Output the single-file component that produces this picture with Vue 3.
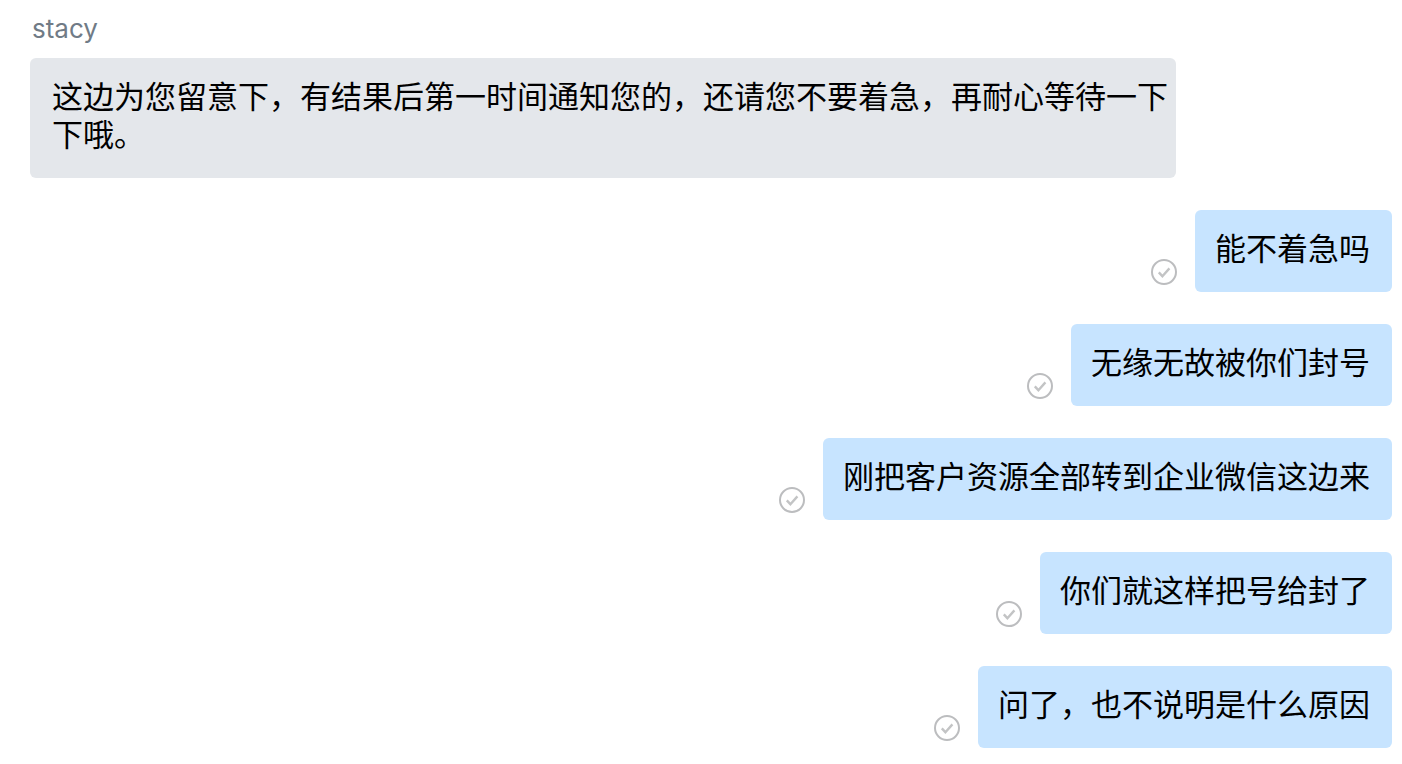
<script setup>
const incoming = {
  sender: 'stacy',
  text: '这边为您留意下，有结果后第一时间通知您的，还请您不要着急，再耐心等待一下下哦。',
}

const outgoing = [
  '能不着急吗',
  '无缘无故被你们封号',
  '刚把客户资源全部转到企业微信这边来',
  '你们就这样把号给封了',
  '问了，也不说明是什么原因',
]
</script>

<template>
  <main class="chat" lang="zh-CN">
    <article class="incoming">
      <div class="sender">{{ incoming.sender }}</div>
      <p class="bubble grey">{{ incoming.text }}</p>
    </article>
    <article v-for="text in outgoing" :key="text" class="outgoing">
      <svg class="status" viewBox="0 0 26 26" role="img" aria-label="已读">
        <circle cx="13" cy="13" r="12" />
        <path d="M7.8 13.4l3.6 3.8 7-7.8" />
      </svg>
      <p class="bubble blue">{{ text }}</p>
    </article>
  </main>
</template>

<style>
body {
  background: #fff;
}
</style>

<style scoped>
.chat {
  display: flex;
  flex-direction: column;
  gap: 32px;
  padding: 14px 10px 16px 30px;
  font-family: Inter, "Noto Sans CJK SC", sans-serif;
}
.incoming {
  display: flex;
  flex-direction: column;
  align-items: flex-start;
  gap: 14px;
}
.sender {
  padding-left: 2px;
  font-size: 26px;
  line-height: 30px;
  color: #707b86;
}
.bubble {
  box-sizing: border-box;
  margin: 0;
  border-radius: 6px;
  font-family: "Noto Sans CJK SC", sans-serif;
  font-size: 31px;
  line-height: 38px;
  color: #000;
}
.grey {
  max-width: 1146px;
  padding: 18px 8px 26px 22px;
  background: #e4e7eb;
}
.outgoing {
  display: flex;
  justify-content: flex-end;
  align-items: flex-end;
  gap: 18px;
}
.blue {
  padding: 18px 22px 26px 20px;
  background: #c7e4ff;
}
.status {
  flex: none;
  width: 26px;
  height: 26px;
  margin-bottom: 7px;
  fill: none;
  stroke: #bcbdbf;
  stroke-width: 2;
}
.status path {
  stroke: #c3c4c5;
  stroke-width: 2.4;
}
</style>
